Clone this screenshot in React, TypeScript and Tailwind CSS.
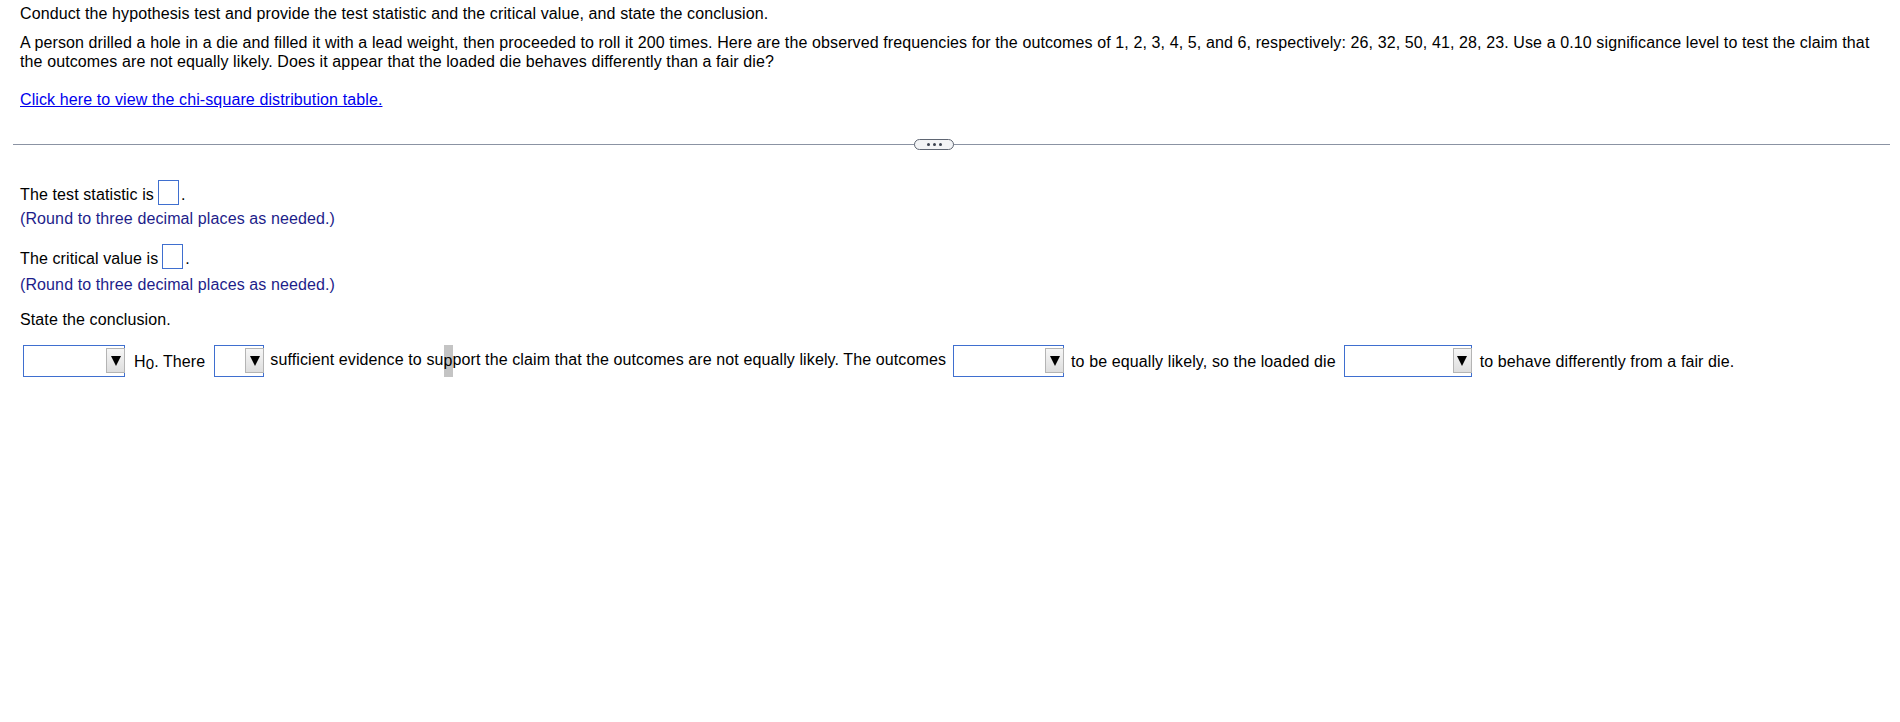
import React from 'react'

const FONT = { fontFamily: '"Liberation Sans", Arial, sans-serif' }

function AnswerBox() {
  return <span className="inline-block w-[21px] h-[25px] border border-[#3f6fcf] bg-white" />
}

function Dropdown({ width }: { width: string }) {
  return (
    <span className={`relative inline-flex items-center justify-end h-[32px] border border-[#3f6fcf] bg-white ${width}`}>
      <span className="flex items-center justify-center w-[19px] h-[25px] mr-[-1px] mb-[1px] border border-[#b4b4b4] bg-gradient-to-b from-[#f6f6f6] to-[#dedede]">
        <svg width="10" height="11" viewBox="0 0 10 11">
          <path d="M0 1 L10 1 L5 11 Z" fill="#000" />
        </svg>
      </span>
    </span>
  )
}

export default function App() {
  return (
    <div className="w-[1900px] h-[722px] bg-white text-black text-[16px] leading-[19px] tracking-[0.11px]" style={FONT}>
      <div className="pl-[20px] pr-[20px] pt-[4px]">
        <p>Conduct the hypothesis test and provide the test statistic and the critical value, and state the conclusion.</p>
        <p className="mt-[10px]">
          A person drilled a hole in a die and filled it with a lead weight, then proceeded to roll it 200 times. Here are the observed frequencies for the outcomes of 1, 2, 3, 4, 5, and 6, respectively: 26, 32, 50, 41, 28, 23. Use a 0.10 significance level to test the claim that the outcomes are not equally likely. Does it appear that the loaded die behaves differently than a fair die?
        </p>
        <p className="mt-[19px]">
          <a href="#" className="text-[#0000ee] underline">Click here to view the chi-square distribution table.</a>
        </p>
      </div>

      {/* separator with expand pill */}
      <div className="relative mt-[35px] ml-[13px] w-[1877px] h-px bg-[#8b93a3]">
        <span className="absolute left-[901px] top-[-5px] flex items-center justify-center gap-[3px] w-[40px] h-[11px] rounded-full border border-[#5f6673] bg-[#f3f4f6]">
          <span className="w-[3px] h-[3px] rounded-full bg-[#3d4350]" />
          <span className="w-[3px] h-[3px] rounded-full bg-[#3d4350]" />
          <span className="w-[3px] h-[3px] rounded-full bg-[#3d4350]" />
        </span>
      </div>

      <div className="pl-[20px]">
        <div className="mt-[37px] flex items-center h-[25px]">
          <span>The test statistic is</span>
          <span className="ml-[4px]"><AnswerBox /></span>
          <span className="ml-[2px]">.</span>
        </div>
        <p className="mt-[2px] text-[#1d1d8a]">(Round to three decimal places as needed.)</p>

        <div className="mt-[18px] flex items-center h-[25px]">
          <span>The critical value is</span>
          <span className="ml-[4px]"><AnswerBox /></span>
          <span className="ml-[2px]">.</span>
        </div>
        <p className="mt-[4px] text-[#1d1d8a]">(Round to three decimal places as needed.)</p>

        <p className="mt-[16px]">State the conclusion.</p>

        <div className="mt-[16px] flex items-center whitespace-nowrap">
          <span className="ml-[3px]"><Dropdown width="w-[102px]" /></span>
          <span className="ml-[9px]">
            H<sub className="text-[15px] relative top-[2px]">0</sub>. There
          </span>
          <span className="ml-[9px]"><Dropdown width="w-[50px]" /></span>
          <span className="ml-[6px]">
            sufficient evidence to su<span className="inline-block bg-[#c4c4c4] h-[32px] leading-[32px] align-middle">p</span>port the claim that the outcomes are not equally likely. The outcomes
          </span>
          <span className="ml-[7px]"><Dropdown width="w-[111px]" /></span>
          <span className="ml-[7px]">to be equally likely, so the loaded die</span>
          <span className="ml-[8px]"><Dropdown width="w-[128px]" /></span>
          <span className="ml-[8px]">to behave differently from a fair die.</span>
        </div>
      </div>
    </div>
  )
}
